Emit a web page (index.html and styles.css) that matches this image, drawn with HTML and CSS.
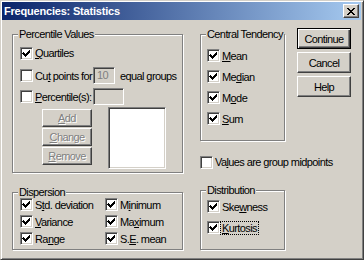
FILE: index.html
```html
<!DOCTYPE html>
<html lang="en">
<head>
    <meta charset="UTF-8">
    <title>Frequencies: Statistics</title>
    <link rel="stylesheet" href="styles.css">
</head>
<body>
    <div class="window">
        <div class="titlebar">
            <span class="title">Frequencies: Statistics</span>
            <span class="close-btn">
                <svg width="8" height="7" viewBox="0 0 8 7" shape-rendering="crispEdges">
                    <path d="M0 0h2v1h1v1h2v-1h1v-1h2v1h-1v1h-1v1h-1v1h1v1h1v1h1v1h-2v-1h-1v-1h-2v1h-1v1h-2v-1h1v-1h1v-1h1v-1h-1v-1h-1v-1h-1z" fill="#000"/>
                </svg>
            </span>
        </div>

        <div class="content">
            <div class="col col-left">
                <fieldset class="group">
                    <legend>Percentile Values</legend>
                    <div class="percentile-body">
                        <div class="prow prow-1">
                            <label class="check"><span class="box"><svg viewBox="0 0 11 11" shape-rendering="crispEdges"><path class="tick" d="M2 4h1v1h1v1h1v-1h1v-1h1v-1h1v-1h1v3h-1v1h-1v1h-1v1h-1v1h-1v-1h-1v-1h-1v-1h-1z"/></svg></span><span><u>Q</u>uartiles</span></label>
                        </div>
                        <div class="prow prow-2">
                            <label class="check check-fixed"><span class="box"></span><span>Cu<u>t</u> points for</span></label>
                            <span class="field field-disabled field-cut">10</span>
                            <span class="after-field">equal groups</span>
                        </div>
                        <div class="prow prow-3">
                            <label class="check check-fixed"><span class="box"></span><span><u>P</u>ercentile(s):</span></label>
                            <span class="field field-disabled field-pct"></span>
                        </div>
                        <div class="pct-area">
                            <div class="pct-buttons">
                                <span class="btn btn-small btn-disabled"><u>A</u>dd</span>
                                <span class="btn btn-small btn-disabled"><u>C</u>hange</span>
                                <span class="btn btn-small btn-disabled"><u>R</u>emove</span>
                            </div>
                            <div class="listbox"></div>
                        </div>
                    </div>
                </fieldset>

                <fieldset class="group group-dispersion">
                    <legend>Dispersion</legend>
                    <div class="dispersion-body">
                        <label class="check"><span class="box"><svg viewBox="0 0 11 11" shape-rendering="crispEdges"><path class="tick" d="M2 4h1v1h1v1h1v-1h1v-1h1v-1h1v-1h1v3h-1v1h-1v1h-1v1h-1v1h-1v-1h-1v-1h-1v-1h-1z"/></svg></span><span>S<u>t</u>d. deviation</span></label>
                        <label class="check"><span class="box"><svg viewBox="0 0 11 11" shape-rendering="crispEdges"><path class="tick" d="M2 4h1v1h1v1h1v-1h1v-1h1v-1h1v-1h1v3h-1v1h-1v1h-1v1h-1v1h-1v-1h-1v-1h-1v-1h-1z"/></svg></span><span>M<u>i</u>nimum</span></label>
                        <label class="check"><span class="box"><svg viewBox="0 0 11 11" shape-rendering="crispEdges"><path class="tick" d="M2 4h1v1h1v1h1v-1h1v-1h1v-1h1v-1h1v3h-1v1h-1v1h-1v1h-1v1h-1v-1h-1v-1h-1v-1h-1z"/></svg></span><span><u>V</u>ariance</span></label>
                        <label class="check"><span class="box"><svg viewBox="0 0 11 11" shape-rendering="crispEdges"><path class="tick" d="M2 4h1v1h1v1h1v-1h1v-1h1v-1h1v-1h1v3h-1v1h-1v1h-1v1h-1v1h-1v-1h-1v-1h-1v-1h-1z"/></svg></span><span>Ma<u>x</u>imum</span></label>
                        <label class="check"><span class="box"><svg viewBox="0 0 11 11" shape-rendering="crispEdges"><path class="tick" d="M2 4h1v1h1v1h1v-1h1v-1h1v-1h1v-1h1v3h-1v1h-1v1h-1v1h-1v1h-1v-1h-1v-1h-1v-1h-1z"/></svg></span><span>Ra<u>n</u>ge</span></label>
                        <label class="check"><span class="box"><svg viewBox="0 0 11 11" shape-rendering="crispEdges"><path class="tick" d="M2 4h1v1h1v1h1v-1h1v-1h1v-1h1v-1h1v3h-1v1h-1v1h-1v1h-1v1h-1v-1h-1v-1h-1v-1h-1z"/></svg></span><span>S.<u>E</u>. mean</span></label>
                    </div>
                </fieldset>
            </div>

            <div class="col col-mid">
                <fieldset class="group">
                    <legend>Central Tendency</legend>
                    <div class="central-body">
                        <label class="check"><span class="box"><svg viewBox="0 0 11 11" shape-rendering="crispEdges"><path class="tick" d="M2 4h1v1h1v1h1v-1h1v-1h1v-1h1v-1h1v3h-1v1h-1v1h-1v1h-1v1h-1v-1h-1v-1h-1v-1h-1z"/></svg></span><span><u>M</u>ean</span></label>
                        <label class="check"><span class="box"><svg viewBox="0 0 11 11" shape-rendering="crispEdges"><path class="tick" d="M2 4h1v1h1v1h1v-1h1v-1h1v-1h1v-1h1v3h-1v1h-1v1h-1v1h-1v1h-1v-1h-1v-1h-1v-1h-1z"/></svg></span><span>Me<u>d</u>ian</span></label>
                        <label class="check"><span class="box"><svg viewBox="0 0 11 11" shape-rendering="crispEdges"><path class="tick" d="M2 4h1v1h1v1h1v-1h1v-1h1v-1h1v-1h1v3h-1v1h-1v1h-1v1h-1v1h-1v-1h-1v-1h-1v-1h-1z"/></svg></span><span>M<u>o</u>de</span></label>
                        <label class="check"><span class="box"><svg viewBox="0 0 11 11" shape-rendering="crispEdges"><path class="tick" d="M2 4h1v1h1v1h1v-1h1v-1h1v-1h1v-1h1v3h-1v1h-1v1h-1v1h-1v1h-1v-1h-1v-1h-1v-1h-1z"/></svg></span><span><u>S</u>um</span></label>
                    </div>
                </fieldset>

                <div class="midpoints">
                    <label class="check"><span class="box"></span><span>Va<u>l</u>ues are group midpoints</span></label>
                </div>

                <fieldset class="group">
                    <legend>Distribution</legend>
                    <div class="distribution-body">
                        <label class="check"><span class="box"><svg viewBox="0 0 11 11" shape-rendering="crispEdges"><path class="tick" d="M2 4h1v1h1v1h1v-1h1v-1h1v-1h1v-1h1v3h-1v1h-1v1h-1v1h-1v1h-1v-1h-1v-1h-1v-1h-1z"/></svg></span><span>Ske<u>w</u>ness</span></label>
                        <label class="check"><span class="box"><svg viewBox="0 0 11 11" shape-rendering="crispEdges"><path class="tick" d="M2 4h1v1h1v1h1v-1h1v-1h1v-1h1v-1h1v3h-1v1h-1v1h-1v1h-1v1h-1v-1h-1v-1h-1v-1h-1z"/></svg></span><span class="focus"><u>K</u>urtosis</span></label>
                    </div>
                </fieldset>
            </div>

            <div class="col col-buttons">
                <span class="btn btn-default">Continue</span>
                <span class="btn">Cancel</span>
                <span class="btn">Help</span>
            </div>
        </div>
    </div>
</body>
</html>
```

FILE: styles.css
```css
body {
    margin: 0;
    font-family: "Liberation Sans", Arial, sans-serif;
    font-size: 11px;
    letter-spacing: -0.6px;
    color: #000;
    background: #d4d0c8;
}

.window {
    width: 364px;
    height: 260px;
    box-sizing: border-box;
    background: #d4d0c8;
    border: 1px solid;
    border-color: #d4d0c8 #404040 #404040 #d4d0c8;
    box-shadow: inset 1px 1px #fff, inset -1px -1px #808080;
    padding: 1px 2px 2px 1px;
}

.titlebar {
    height: 18px;
    display: flex;
    align-items: center;
    justify-content: space-between;
    padding: 0 2px 0 2px;
    background: linear-gradient(to right, #0a246a, #a6caf0);
}

.title {
    color: #fff;
    font-weight: bold;
    letter-spacing: -0.2px;
}

.close-btn {
    width: 16px;
    height: 14px;
    box-sizing: border-box;
    display: flex;
    align-items: center;
    justify-content: center;
    background: #d4d0c8;
    border: 1px solid;
    border-color: #fff #404040 #404040 #fff;
    box-shadow: inset -1px -1px #808080;
}

.content {
    display: flex;
    padding: 8px 0 0 10px;
}

.col {
    display: flex;
    flex-direction: column;
}

.col-left {
    width: 171px;
}

.col-mid {
    width: 85px;
    margin-left: 17px;
}

.col-buttons {
    width: 54px;
    margin-left: 12px;
    gap: 3px;
}

/* group boxes */
.group {
    margin: 0;
    padding: 0;
    min-width: 0;
    border: 1px solid #808080;
    box-shadow: inset 1px 1px #fff, 1px 1px #fff;
}

.group legend {
    margin-left: 5px;
    padding: 0 1px;
    line-height: 12px;
    background: #d4d0c8;
}

.group-dispersion {
    margin-top: 13px;
}

/* checkboxes */
.check {
    display: flex;
    align-items: center;
    white-space: nowrap;
}

.box {
    width: 13px;
    height: 13px;
    box-sizing: border-box;
    flex: none;
    margin-right: 2px;
    background: #fff;
    border: 1px solid;
    border-color: #808080 #fff #fff #808080;
    box-shadow: inset 1px 1px #404040, inset -1px -1px #d4d0c8;
}

.box svg {
    display: block;
    width: 11px;
    height: 11px;
}

.tick {
    fill: #000;
}

.focus {
    outline: 1px dotted #000;
    outline-offset: 0;
    padding: 0 1px;
    margin-left: -1px;
}

/* percentile values */
.percentile-body {
    padding: 2px 0 3px 7px;
}

.prow {
    display: flex;
    align-items: center;
}

.prow-1 { height: 22px; }
.prow-2 { height: 23px; }
.prow-3 { height: 19px; }

.check-fixed {
    width: 73px;
}

.field {
    height: 17px;
    box-sizing: border-box;
    padding: 1px 3px;
    line-height: 13px;
    border: 1px solid;
    border-color: #808080 #fff #fff #808080;
    box-shadow: inset 1px 1px #404040, inset -1px -1px #d4d0c8;
}

.field-disabled {
    background: #d4d0c8;
    color: #808080;
}

.field-cut { width: 22px; }
.field-pct { width: 31px; }

.after-field {
    margin-left: 5px;
}

.pct-area {
    display: flex;
    margin-top: 1px;
    padding-left: 22px;
}

.pct-buttons {
    display: flex;
    flex-direction: column;
    gap: 1px;
    margin-top: 2px;
}

.listbox {
    width: 58px;
    height: 62px;
    box-sizing: border-box;
    margin-left: 16px;
    background: #fff;
    border: 1px solid;
    border-color: #808080 #fff #fff #808080;
    box-shadow: inset 1px 1px #404040, inset -1px -1px #d4d0c8;
}

/* buttons */
.btn {
    height: 21px;
    box-sizing: border-box;
    display: flex;
    align-items: center;
    justify-content: center;
    border: 1px solid;
    border-color: #fff #404040 #404040 #fff;
    box-shadow: inset -1px -1px #808080;
}

.btn-default {
    border-color: #000;
    box-shadow: inset 1px 1px #fff, inset -1px -1px #404040, inset -2px -2px #808080;
}

.btn-small {
    width: 50px;
    height: 18px;
}

.btn-disabled {
    color: #808080;
    text-shadow: 1px 1px #fff;
}

/* dispersion */
.dispersion-body {
    display: grid;
    grid-template-columns: 85px auto;
    grid-auto-rows: 17px;
    margin-top: -2px;
    padding: 0 0 2px 7px;
}

/* central tendency / distribution */
.central-body {
    display: grid;
    grid-auto-rows: 21px;
    padding: 5px 0 11px 6px;
}

.midpoints {
    height: 16px;
    display: flex;
    align-items: center;
    margin-top: 13px;
}

.midpoints + .group {
    margin-top: 14px;
}

.distribution-body {
    display: grid;
    grid-auto-rows: 21px;
    padding: 0 0 11px 6px;
}
```
